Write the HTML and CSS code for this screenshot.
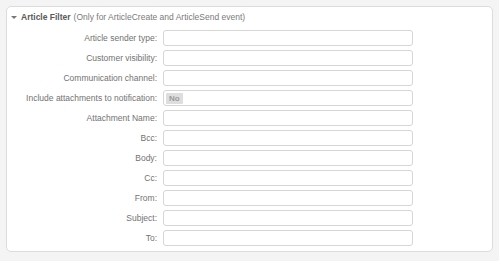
FILE: index.html
```html
<!DOCTYPE html>
<html lang="en">
<head>
    <meta charset="UTF-8">
    <title>Article Filter</title>
    <link rel="stylesheet" href="styles.css">
</head>
<body>
    <div class="widget">
        <div class="widget-header">
            <span class="toggle"></span>
            <span class="title">Article Filter</span>
            <span class="subtitle">(Only for ArticleCreate and ArticleSend event)</span>
        </div>
        <div class="fields">
            <label>Article sender type:</label>
            <div class="field"></div>
            <label>Customer visibility:</label>
            <div class="field"></div>
            <label>Communication channel:</label>
            <div class="field"></div>
            <label>Include attachments to notification:</label>
            <div class="field"><span class="tag">No</span></div>
            <label>Attachment Name:</label>
            <div class="field"></div>
            <label>Bcc:</label>
            <div class="field"></div>
            <label>Body:</label>
            <div class="field"></div>
            <label>Cc:</label>
            <div class="field"></div>
            <label>From:</label>
            <div class="field"></div>
            <label>Subject:</label>
            <div class="field"></div>
            <label>To:</label>
            <div class="field"></div>
        </div>
    </div>
</body>
</html>
```

FILE: styles.css
```css
:root {
    --page-bg: #f4f4f4;
    --border: #dcdcdc;
    --text: #727272;
    --title: #5a5a5a;
}

body {
    margin: 0;
    padding: 6px;
    background-color: var(--page-bg);
    font-family: "Liberation Sans", Arial, sans-serif;
    font-size: 8.5px;
    color: var(--text);
}

.widget {
    background: #fff;
    border: 1px solid var(--border);
    border-radius: 5px;
    height: 246px;
    box-sizing: border-box;
}

.widget-header {
    display: flex;
    align-items: center;
    height: 20px;
    padding-left: 4px;
    gap: 3px;
}

.toggle {
    width: 0;
    height: 0;
    border-left: 3px solid transparent;
    border-right: 3px solid transparent;
    border-top: 3px solid #777;
    margin-right: 1px;
}

.title {
    font-weight: bold;
    color: var(--title);
}

.subtitle {
    color: #7a7a7a;
}

.fields {
    display: grid;
    grid-template-columns: 150px 250px;
    grid-auto-rows: 16px;
    column-gap: 6px;
    row-gap: 4px;
    margin-top: 3px;
}

.fields label {
    text-align: right;
    line-height: 16px;
    white-space: nowrap;
}

.field {
    border: 1px solid #d6d6d6;
    border-radius: 3px;
    box-sizing: border-box;
    display: flex;
    align-items: center;
    padding-left: 2px;
}

.tag {
    background: #dedede;
    color: #9a9a9a;
    font-weight: bold;
    font-size: 8px;
    line-height: 11px;
    padding: 0 3px;
    border-radius: 1px;
}
```
